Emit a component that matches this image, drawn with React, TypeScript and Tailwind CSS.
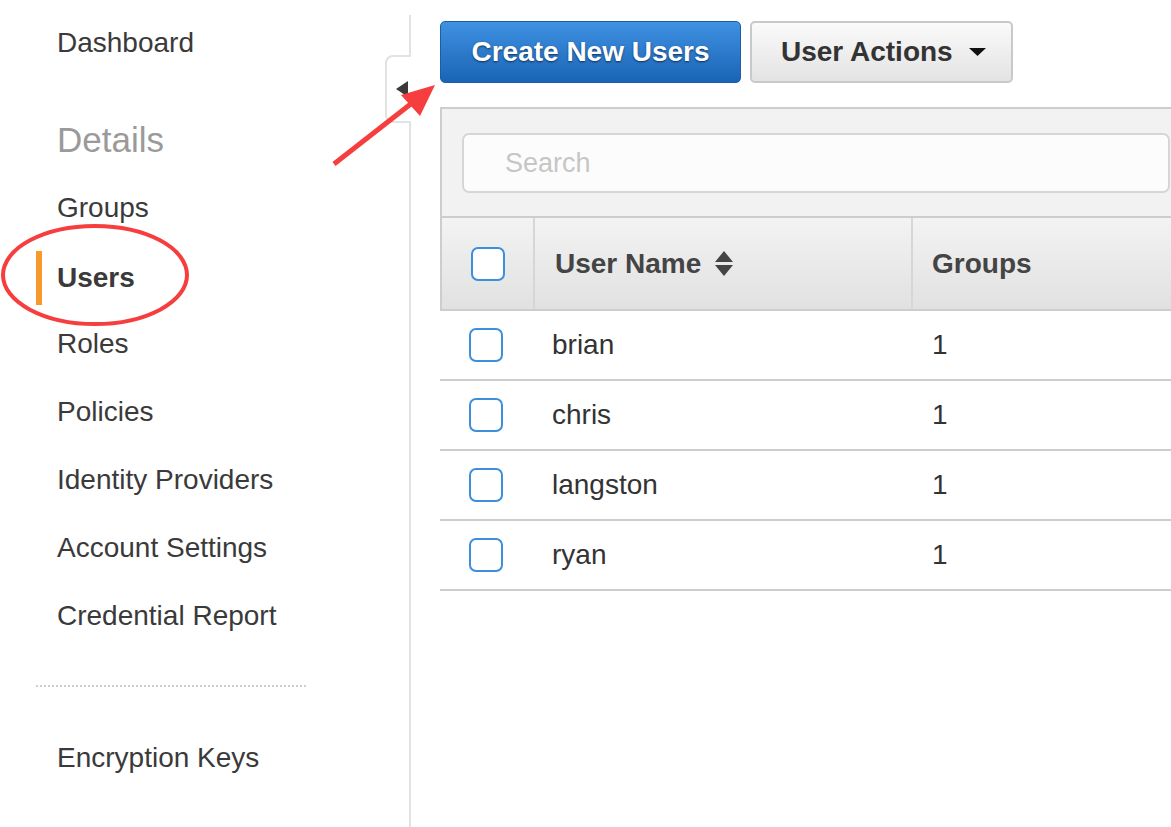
const users = ["brian", "chris", "langston", "ryan"];

const navTop = ["Groups"];
const navBottom = ["Roles", "Policies", "Identity Providers", "Account Settings", "Credential Report"];

function Checkbox() {
  return <div className="w-[34px] h-[34px] rounded-[7px] border-2 border-[#3d8fdc] bg-white" />;
}

function NavItem({ label }: { label: string }) {
  return <div className="h-[68px] flex items-center pl-[57px]">{label}</div>;
}

export default function App() {
  return (
    <div
      className="relative w-[1171px] h-[827px] overflow-hidden bg-white text-[#333]"
      style={{ fontFamily: '"Liberation Sans", Arial, sans-serif' }}
    >
      <div className="flex h-full">
        {/* sidebar */}
        <div className="w-[409px] shrink-0 pt-[9px] text-[28px] text-[#3a3a3a]">
          <NavItem label="Dashboard" />
          <div className="h-[68px] mt-[29px] flex items-center pl-[57px] text-[35px] text-[#9a9a9a]">Details</div>
          {navTop.map((l) => (
            <NavItem key={l} label={l} />
          ))}
          <div className="h-[68px] pt-[4px] flex items-center pl-[36px]">
            <span className="h-[54px] flex items-center border-l-[6px] border-[#f7992b] pl-[15px] font-bold">Users</span>
          </div>
          {navBottom.map((l) => (
            <NavItem key={l} label={l} />
          ))}
          <div className="ml-[36px] mt-[35px] w-[270px] border-t-2 border-dotted border-[#cfcfcf]" />
          <div className="h-[68px] mt-[37px] flex items-center pl-[57px]">Encryption Keys</div>
        </div>

        {/* divider with collapse tab */}
        <div className="relative w-[2px] shrink-0 mt-[15px] bg-[#e2e2e2]">
          <div className="absolute top-[40px] right-0 w-[26px] h-[68px] bg-white border-2 border-r-0 border-[#e2e2e2] rounded-l-[8px] flex items-center pl-[9px]">
            <svg width="12" height="16" viewBox="0 0 12 16">
              <path d="M12 0 L0 8 L12 16 Z" fill="#3a3a3a" />
            </svg>
          </div>
        </div>

        {/* main */}
        <div className="pl-[29px] pt-[21px] shrink-0">
          <div className="flex gap-[9px]">
            <button className="w-[301px] h-[62px] rounded-[5px] border border-[#1b5da6] bg-linear-to-b from-[#3f91e2] to-[#1a64b6] text-white font-bold text-[28px] [text-shadow:0_1px_2px_rgba(0,0,0,0.6)]">
              Create New Users
            </button>
            <button className="w-[263px] h-[62px] rounded-[5px] border-2 border-[#c9c9c9] bg-linear-to-b from-[#fafafa] to-[#e3e3e3] text-[#333] font-bold text-[28px] flex items-center pl-[29px] gap-[16px]">
              User Actions
              <svg width="17" height="8" viewBox="0 0 17 8">
                <path d="M0 0 H17 L8.5 8 Z" fill="#111" />
              </svg>
            </button>
          </div>

          <div className="w-[752px] mt-[24px]">
            <div className="border-t-2 border-l-2 border-[#cdcdcd] bg-[#f2f2f2] pt-[24px] pb-[23px] pl-[20px] pr-[22px]">
              <div className="h-[60px] rounded-[7px] border-2 border-[#d6d6d6] bg-[#fcfcfc] flex items-center pl-[41px] text-[27px] text-[#c6c6c6]">
                Search
              </div>
            </div>
            <div className="flex h-[95px] border-y-2 border-l-2 border-[#cdcdcd] bg-linear-to-b from-[#f3f3f3] to-[#e1e1e1] font-bold text-[28px] text-[#444]">
              <div className="w-[93px] shrink-0 flex items-center pl-[29px] border-r-2 border-[#d6d6d6]">
                <Checkbox />
              </div>
              <div className="w-[378px] shrink-0 flex items-center pl-[20px] gap-[14px] border-r-2 border-[#d6d6d6]">
                User Name
                <svg width="18" height="25" viewBox="0 0 18 25">
                  <path d="M9 0 L18 11 H0 Z M0 14 H18 L9 25 Z" fill="#444" />
                </svg>
              </div>
              <div className="flex items-center pl-[19px]">Groups</div>
            </div>
            {users.map((u) => (
              <div key={u} className="flex h-[70px] border-b-2 border-[#cdcdcd] text-[28px] text-[#333]">
                <div className="w-[95px] shrink-0 flex items-center pl-[29px]">
                  <Checkbox />
                </div>
                <div className="w-[378px] shrink-0 flex items-center pl-[17px]">{u}</div>
                <div className="flex items-center pl-[19px]">1</div>
              </div>
            ))}
          </div>
        </div>
      </div>

      {/* annotations */}
      <svg className="absolute inset-0 pointer-events-none" width="1171" height="827" viewBox="0 0 1171 827">
        <ellipse cx="95" cy="275" rx="92" ry="49" fill="none" stroke="#f63e3e" strokeWidth="4" />
        <line x1="334" y1="164" x2="412" y2="103" stroke="#f63e3e" strokeWidth="5" />
        <path d="M435 85 L401 95 L420 116 Z" fill="#f63e3e" />
      </svg>
    </div>
  );
}
